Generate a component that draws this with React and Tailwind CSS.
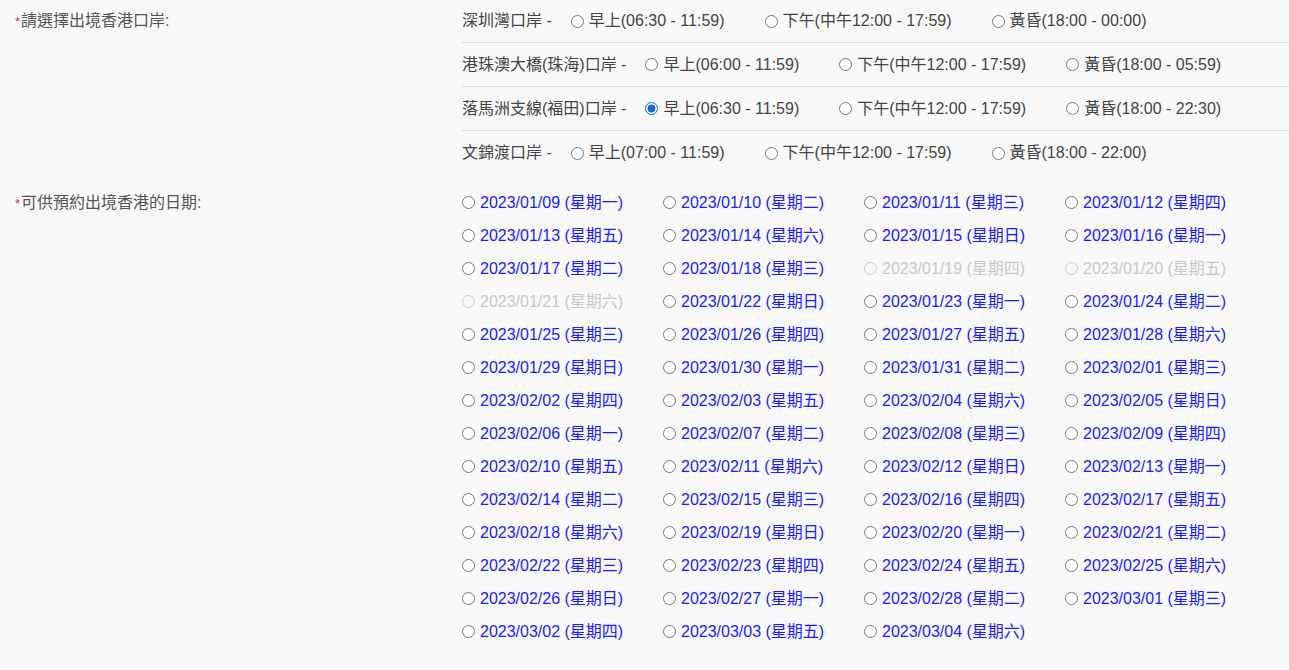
import React from "react";

const ports = [
  {
    name: "深圳灣口岸 -",
    slots: ["早上(06:30 - 11:59)", "下午(中午12:00 - 17:59)", "黃昏(18:00 - 00:00)"],
  },
  {
    name: "港珠澳大橋(珠海)口岸 -",
    slots: ["早上(06:00 - 11:59)", "下午(中午12:00 - 17:59)", "黃昏(18:00 - 05:59)"],
  },
  {
    name: "落馬洲支線(福田)口岸 -",
    slots: ["早上(06:30 - 11:59)", "下午(中午12:00 - 17:59)", "黃昏(18:00 - 22:30)"],
    checked: 0,
  },
  {
    name: "文錦渡口岸 -",
    slots: ["早上(07:00 - 11:59)", "下午(中午12:00 - 17:59)", "黃昏(18:00 - 22:00)"],
  },
];

const weekdays = ["日", "一", "二", "三", "四", "五", "六"];
const disabledDates = ["2023/01/19", "2023/01/20", "2023/01/21"];

const pad = (n) => String(n).padStart(2, "0");

const buildDates = () => {
  const list = [];
  const d = new Date(2023, 0, 9);
  const end = new Date(2023, 2, 4);
  while (d <= end) {
    const value = `${d.getFullYear()}/${pad(d.getMonth() + 1)}/${pad(d.getDate())}`;
    list.push({ value, label: `${value} (星期${weekdays[d.getDay()]})` });
    d.setDate(d.getDate() + 1);
  }
  return list;
};

const dates = buildDates();

const Label = ({ children }) => (
  <div className="w-[462px] shrink-0 pl-[15px] text-[#555] flex items-start">
    <span className="text-[#e0245e] text-[13px] leading-none mt-[5px] mr-[1px]">*</span>
    <span>{children}</span>
  </div>
);

export default function App() {
  return (
    <div
      className="min-h-screen bg-[#f8f8f8] text-[16px] text-[#444]"
      style={{ fontFamily: '"Liberation Sans", "Noto Sans CJK TC", sans-serif' }}
    >
      {/* 口岸 */}
      <div className="flex">
        <div className="pt-[10px] leading-[21px]">
          <Label>請選擇出境香港口岸:</Label>
        </div>
        <div className="flex-1">
          {ports.map((port, i) => (
            <div
              key={port.name}
              className={`flex items-center ${i === 0 ? "h-[43px]" : "h-[44px]"} ${
                i < ports.length - 1 ? "border-b border-[#dcdcdc]" : ""
              }`}
            >
              <span className="whitespace-nowrap">{port.name}</span>
              {port.slots.map((slot, j) => (
                <label
                  key={slot}
                  className={`flex items-center whitespace-nowrap ${j === 0 ? "ml-[19px]" : "ml-[40px]"}`}
                >
                  <input
                    type="radio"
                    name="port"
                    defaultChecked={port.checked === j}
                    className="m-0 mr-[5px] w-[13px] h-[13px] accent-[#1a68d6]"
                  />
                  {slot}
                </label>
              ))}
            </div>
          ))}
        </div>
      </div>

      {/* 日期 */}
      <div className="flex mt-[11px]">
        <div className="pt-[6px] leading-[21px]">
          <Label>可供預約出境香港的日期:</Label>
        </div>
        <div className="grid grid-cols-[repeat(4,201px)] auto-rows-[33px]">
          {dates.map((d) => {
            const disabled = disabledDates.includes(d.value);
            return (
              <label
                key={d.value}
                className={`flex items-center whitespace-nowrap ${
                  disabled ? "text-[#c8c8c8]" : "text-[#1a1aff]"
                }`}
              >
                <input
                  type="radio"
                  name="date"
                  disabled={disabled}
                  className="m-0 mr-[5px] w-[13px] h-[13px]"
                />
                {d.label}
              </label>
            );
          })}
        </div>
      </div>
    </div>
  );
}
